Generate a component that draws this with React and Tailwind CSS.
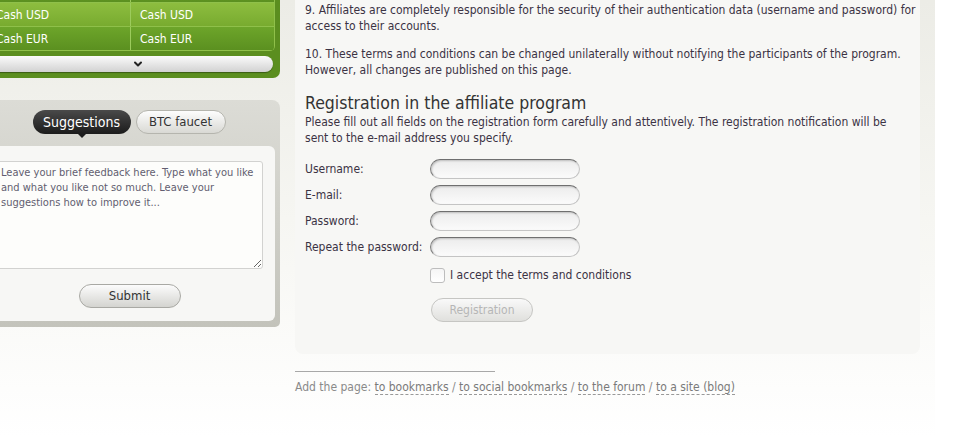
import { ChevronDown } from "lucide-react";

const font = { fontFamily: '"DejaVu Sans Condensed", "DejaVu Sans", sans-serif' };

function Field({ label }) {
  return (
    <div className="flex items-center h-[20px]">
      <label className="w-[125px] shrink-0">{label}</label>
      <input
        type="text"
        className="w-[150px] h-[20px] rounded-full border border-[#c4c4c4] border-t-[#6f6f6f] border-l-[#7d7d7d] bg-gradient-to-b from-[#ececec] to-[#fbfbfb] shadow-[inset_1px_1px_2px_rgba(0,0,0,0.2)] outline-none"
      />
    </div>
  );
}

function CashRow({ left, right, light }) {
  return (
    <div
      className={`flex h-[24px] items-center text-white text-[12px] border-b border-[#8fc04a] ${
        light
          ? "bg-gradient-to-b from-[#8dbd3f] to-[#78ab2f]"
          : "bg-gradient-to-b from-[#6da52a] to-[#5b9020]"
      }`}
    >
      <div className="w-[145px] pl-[10px] border-r border-[#9ccb5c] h-full flex items-center">{left}</div>
      <div className="flex-1 pl-[9px]">{right}</div>
    </div>
  );
}

export default function App() {
  return (
    <div className="w-[953px] h-[438px] overflow-hidden bg-white text-[12px] text-[#3b3344]" style={font}>
      <div className="w-[935px] h-full flex bg-gradient-to-b from-[#ecece6] via-[#f6f6f2] to-[#ffffff]">
        {/* left column */}
        <div className="w-[300px] ml-[-20px] shrink-0 flex flex-col">
          <div className="mt-[-21px] bg-[#5b8e1f] rounded-br-[7px] pl-[5px] pr-[5px] pb-[6px]">
            <div className="rounded-b-[5px] overflow-hidden border-x border-[#8fc04a]">
              <CashRow left="" right="" light={false} />
              <CashRow left="Cash USD" right="Cash USD" light />
              <CashRow left="Cash EUR" right="Cash EUR" light={false} />
            </div>
            <div className="mt-[5px] mr-[2px] h-[16px] rounded-full bg-gradient-to-b from-[#fbfbfb] to-[#d2d2d2] shadow-[0_1px_1px_rgba(0,0,0,0.35)] flex items-center justify-center pl-[18px]">
              <ChevronDown size={12} strokeWidth={4} className="text-[#222]" />
            </div>
          </div>

          <div className="mt-[22px] bg-gradient-to-b from-[#dcdcd6] to-[#c3c3bb] rounded-tr-[8px] rounded-br-[5px] pr-[5px] pb-[6px]">
            <div className="h-[46px] flex items-start justify-center gap-[5px] pt-[10px] pl-[3px]">
              <div className="relative">
                <div className="w-[98px] h-[24px] rounded-full bg-gradient-to-b from-[#4a4a4a] to-[#1c1c1c] text-white text-[14px] flex items-center justify-center">
                  Suggestions
                </div>
                <div className="absolute left-1/2 -translate-x-1/2 top-[23px] w-0 h-0 border-l-[5px] border-r-[5px] border-t-[5px] border-l-transparent border-r-transparent border-t-[#1c1c1c]" />
              </div>
              <div className="w-[90px] h-[24px] rounded-full bg-gradient-to-b from-[#fdfdfd] to-[#d9d9d4] border border-[#b5b5ae] text-[#333] text-[13px] flex items-center justify-center">
                BTC faucet
              </div>
            </div>
            <div className="bg-[#f7f7f5] rounded-r-[6px] pl-[12px] pr-[12px] pt-[15px] pb-[13px] flex flex-col items-center">
              <textarea
                className="w-full h-[108px] bg-[#fdfdfb] border border-[#d2d2d0] rounded-[3px] px-[8px] py-[3px] text-[11px] leading-[15px] text-[#5f5a6e] placeholder:text-[#625d70] outline-none"
                style={font}
                placeholder="Leave your brief feedback here. Type what you like and what you like not so much. Leave your suggestions how to improve it..."
              />
              <button
                className="mt-[15px] ml-[4px] w-[102px] h-[24px] rounded-full border border-[#a9a9a4] bg-gradient-to-b from-[#fcfcfc] to-[#d4d4d0] text-[13px] text-[#333]"
                style={font}
              >
                Submit
              </button>
            </div>
          </div>
        </div>

        {/* main */}
        <div className="ml-[15px] w-[625px] flex flex-col">
          <div className="bg-[#f7f7f5] rounded-b-[8px] pl-[10px] pr-[2px] pt-[2px] pb-[32px] leading-[16px]">
            <p>
              9. Affiliates are completely responsible for the security of their authentication data (username and password) for
              access to their accounts.
            </p>
            <p className="mt-[12px]">
              10. These terms and conditions can be changed unilaterally without notifying the participants of the program.
              However, all changes are published on this page.
            </p>
            <h2 className="mt-[14px] text-[17.5px] leading-[22px] text-[#333]">Registration in the affiliate program</h2>
            <p className="pr-[10px]">
              Please fill out all fields on the registration form carefully and attentively. The registration notification will be
              sent to the e-mail address you specify.
            </p>
            <div className="mt-[13px] flex flex-col gap-[6px]">
              <Field label="Username:" />
              <Field label="E-mail:" />
              <Field label="Password:" />
              <Field label="Repeat the password:" />
            </div>
            <div className="mt-[10px] ml-[125px] flex items-center gap-[5px] h-[16px]">
              <span className="w-[15px] h-[15px] rounded-[3px] border border-[#bdbdbd] bg-gradient-to-b from-[#f5f5f5] to-[#ffffff]" />
              <span>I accept the terms and conditions</span>
            </div>
            <button
              className="mt-[15px] ml-[126px] w-[102px] h-[24px] rounded-full border border-[#c6c6c3] bg-gradient-to-b from-[#f9f9f9] to-[#e0e0dd] text-[#b6b6b6]"
              style={font}
            >
              Registration
            </button>
          </div>
          <div className="mt-[17px] w-[200px] border-t border-[#a8a8a8]" />
          <div className="mt-[6px] text-[#8a8a8a]">
            Add the page: <a className="border-b border-dashed border-[#999] text-[#7a7a7a]">to bookmarks</a> /{" "}
            <a className="border-b border-dashed border-[#999] text-[#7a7a7a]">to social bookmarks</a> /{" "}
            <a className="border-b border-dashed border-[#999] text-[#7a7a7a]">to the forum</a> /{" "}
            <a className="border-b border-dashed border-[#999] text-[#7a7a7a]">to a site (blog)</a>
          </div>
        </div>
      </div>
    </div>
  );
}
